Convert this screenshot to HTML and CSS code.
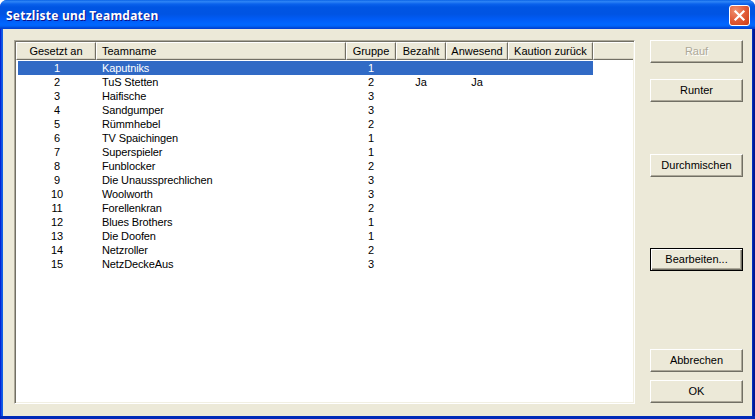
FILE: index.html
```html
<!DOCTYPE html>
<html lang="de">
<head>
<meta charset="utf-8">
<title>Setzliste und Teamdaten</title>
<link rel="stylesheet" href="styles.css">
</head>
<body>
<div class="window">
  <header class="titlebar">
    <h1>Setzliste und Teamdaten</h1>
    <button class="close" aria-label="Schließen"><svg width="21" height="21" viewBox="0 0 21 21"><path d="M6.5 6.5l8 8M14.5 6.5l-8 8" stroke="#fff" stroke-width="2.2" stroke-linecap="square"/></svg></button>
  </header>
  <main class="content">
    <section class="list">
      <div class="row head">
        <span class="c">Gesetzt an</span><span>Teamname</span><span class="c">Gruppe</span><span class="c">Bezahlt</span><span class="c">Anwesend</span><span class="c">Kaution zurück</span><span class="rest"></span>
      </div>
      <div class="rows">
        <div class="row sel"><span class="c">1</span><span>Kaputniks</span><span class="c">1</span></div>
        <div class="row"><span class="c">2</span><span>TuS Stetten</span><span class="c">2</span><span class="c">Ja</span><span class="c">Ja</span></div>
        <div class="row"><span class="c">3</span><span>Haifische</span><span class="c">3</span></div>
        <div class="row"><span class="c">4</span><span>Sandgumper</span><span class="c">3</span></div>
        <div class="row"><span class="c">5</span><span>Rümmhebel</span><span class="c">2</span></div>
        <div class="row"><span class="c">6</span><span>TV Spaichingen</span><span class="c">1</span></div>
        <div class="row"><span class="c">7</span><span>Superspieler</span><span class="c">1</span></div>
        <div class="row"><span class="c">8</span><span>Funblocker</span><span class="c">2</span></div>
        <div class="row"><span class="c">9</span><span>Die Unaussprechlichen</span><span class="c">3</span></div>
        <div class="row"><span class="c">10</span><span>Woolworth</span><span class="c">3</span></div>
        <div class="row"><span class="c">11</span><span>Forellenkran</span><span class="c">2</span></div>
        <div class="row"><span class="c">12</span><span>Blues Brothers</span><span class="c">1</span></div>
        <div class="row"><span class="c">13</span><span>Die Doofen</span><span class="c">1</span></div>
        <div class="row"><span class="c">14</span><span>Netzroller</span><span class="c">2</span></div>
        <div class="row"><span class="c">15</span><span>NetzDeckeAus</span><span class="c">3</span></div>
      </div>
    </section>
    <aside class="actions">
      <button class="btn" disabled>Rauf</button>
      <button class="btn runter">Runter</button>
      <button class="btn mix">Durchmischen</button>
      <button class="btn default">Bearbeiten...</button>
      <button class="btn cancel">Abbrechen</button>
      <button class="btn ok">OK</button>
    </aside>
  </main>
</div>
</body>
</html>
```
FILE: styles.css
```css
* { box-sizing: border-box; }
body { margin: 0; background: #fff; font: 11px/14px "Liberation Sans", Arial, sans-serif; color: #000; }
.window {
  width: 755px; height: 419px; display: flex; flex-direction: column;
  border-radius: 7px 7px 0 0; overflow: hidden; padding: 0 3px 3px;
  background: linear-gradient(90deg, #0019cf 0, #0831d9 1px, #166aee 2px, #0855dd 3px, #0855dd 752px, #0441d8 752px, #001ea0 753px, #00138c 755px);
  box-shadow: inset 0 -3px #0029b8;
}
.titlebar {
  height: 29px; flex: none; margin: 0 -3px; padding: 4px 5px 0 6px;
  display: flex; justify-content: space-between; align-items: flex-start;
  background: linear-gradient(#0058e0 0, #2b83f5 1px, #2a80f4 2px, #0a62ec 4px, #0055e3 7px, #0054e3 14px, #005bf5 19px, #0066ff 24px, #0063f8 26px, #0047d4 28px, #003dd7 29px);
}
h1 { margin: 1px 0 0; font: bold 12px/22px "Noto Sans", "Open Sans", sans-serif; letter-spacing: .24px; color: #fff; text-shadow: 1px 1px #0f1089; white-space: nowrap; }
.close {
  width: 21px; height: 21px; margin: 1px 0 0; padding: 0; border: 1px solid #fff; border-radius: 3px;
  background: radial-gradient(circle at 30% 25%, #ef9170 0, #e3603d 45%, #cc3b13 100%);
}
.close svg { display: block; margin: -1px; fill: none; }
.content { flex: 1; background: #ece9d8; display: flex; padding: 11px 9px 12px 11px; justify-content: space-between; align-items: flex-start; }
.list {
  width: 621px; height: 364px; background: #fff;
  border: 1px solid; border-color: #aca899 #fff #fff #aca899;
  box-shadow: inset 1px 1px #716f64, inset -1px -1px #f1efe2; padding: 1px;
}
.row { display: grid; grid-template-columns: 80px 250px 50px 50px 62px 85px 1fr; height: 14px; white-space: nowrap; }
.c { text-align: center; }
.head { height: 17px; line-height: 16px; }
.head span {
  background: #ece9d8; border: 1px solid; border-color: #fff #716f64 #716f64 #fff;
  box-shadow: inset -1px -1px #d6d2c2; padding: 0 5px;
}
.head .c { padding: 0; }
.head .rest { border-right: 0; box-shadow: inset 0 -1px #d6d2c2; }
.rows { padding: 2px 0 0 2px; letter-spacing: -.12px; }
.rows .row { width: 575px; grid-template-columns: 78px 250px 50px 50px 62px 85px; }
.rows span { padding-left: 6px; }
.rows .c { padding-left: 0; }
.sel { background: #316ac5; color: #fff; }
.actions { width: 93px; display: flex; flex-direction: column; }
.btn {
  height: 23px; margin-bottom: 1px; padding: 0 0 1px; font: inherit; color: #000; background: #ece9d8;
  border: 1px solid; border-color: #fff #716f64 #716f64 #fff; box-shadow: inset -1px -1px #aca899;
}
.btn:disabled { color: #aca899; text-shadow: 1px 1px #fff; }
.runter { margin-top: 15px; }
.mix { margin-top: 51px; }
.default { margin-top: 70px; margin-bottom: 0; border-color: #000; box-shadow: inset 1px 1px #fff, inset -1px -1px #716f64, inset -2px -2px #aca899; }
.cancel { margin-top: 78px; }
.ok { margin-top: 7px; }
```
